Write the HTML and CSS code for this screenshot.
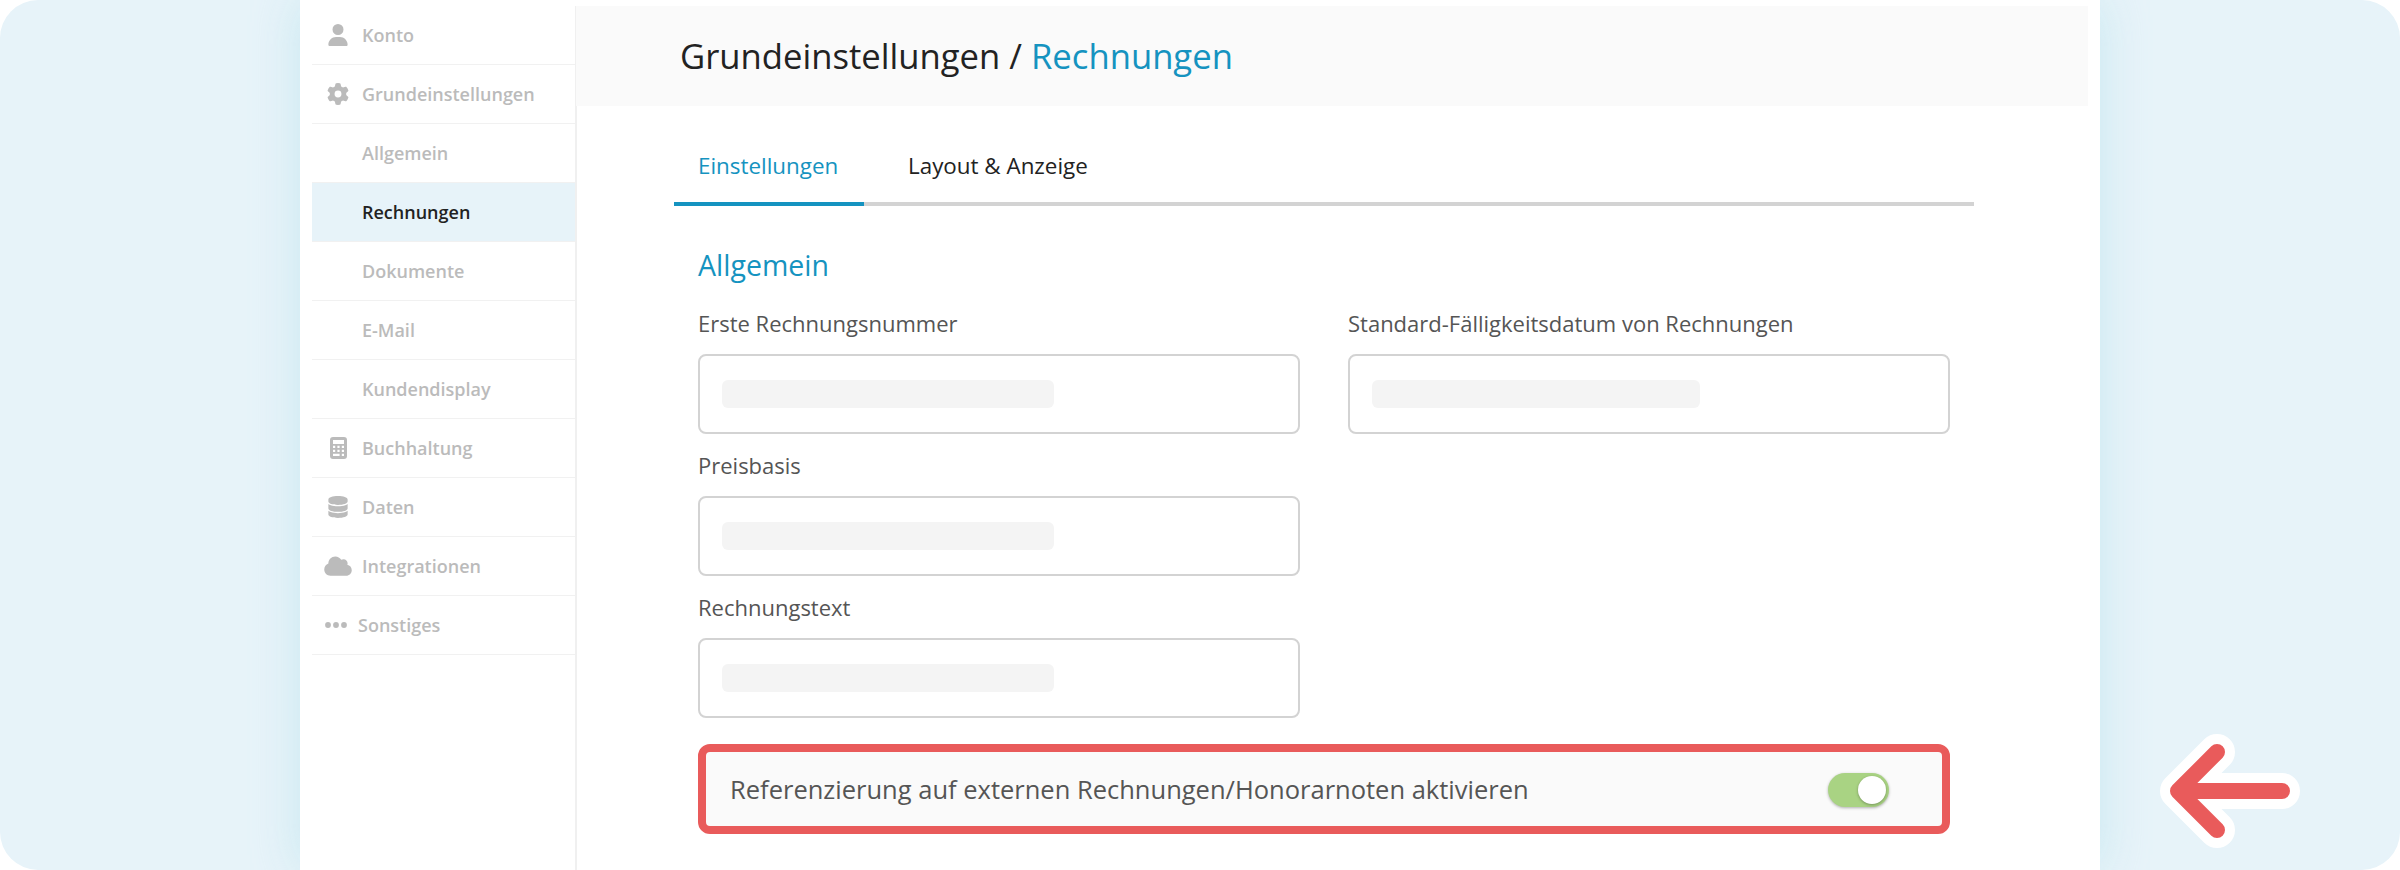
FILE: index.html
```html
<!DOCTYPE html>
<html lang="de">
<head>
<meta charset="utf-8">
<title>Grundeinstellungen / Rechnungen</title>
<link rel="stylesheet" href="styles.css">
</head>
<body>
<div class="stage">
  <div class="panel">
    <nav class="sidebar">
      <a class="item"><span class="icon"><svg width="20" height="22" viewBox="0 0 448 512"><path d="M224 256a128 128 0 1 0 0-256 128 128 0 1 0 0 256zm-46 48C80 304 0 384 0 482c0 17 13 30 30 30h388c17 0 30-13 30-30 0-98-80-178-178-178z"/></svg></span>Konto</a>
      <a class="item"><span class="icon"><svg width="22" height="22" viewBox="0 0 512 512"><path d="M496 167c3 9 0 18-6 25l-44 39a184 184 0 0 1 0 50l44 39c6 7 9 16 6 25-5 12-10 23-16 34l-5 8c-7 11-14 22-22 32-6 7-16 10-25 7l-56-18c-13 10-28 19-43 25l-13 57c-2 9-9 16-18 18a257 257 0 0 1-84 0c-9-2-16-9-18-18l-13-57c-15-6-30-15-43-25l-56 18c-9 3-19 0-25-7-8-10-15-21-22-32l-5-8c-6-11-11-22-16-34-3-9 0-18 6-25l44-39a184 184 0 0 1 0-50l-44-39c-6-7-9-16-6-25 5-12 10-23 16-34l5-8c7-11 14-22 22-32 6-7 16-10 25-7l56 18c13-10 28-19 43-25l13-57c2-9 9-16 18-18a257 257 0 0 1 84 0c9 2 16 9 18 18l13 57c15 6 30 15 43 25l56-18c9-3 19 0 25 7 8 10 15 21 22 32l5 8c6 11 11 22 16 34zM256 336a80 80 0 1 0 0-160 80 80 0 1 0 0 160z"/></svg></span>Grundeinstellungen</a>
      <a class="item sub">Allgemein</a>
      <a class="item sub active">Rechnungen</a>
      <a class="item sub">Dokumente</a>
      <a class="item sub">E-Mail</a>
      <a class="item sub">Kundendisplay</a>
      <a class="item"><span class="icon"><svg width="17" height="22" viewBox="0 0 17 22"><path fill-rule="evenodd" d="M3 0h11a3 3 0 0 1 3 3v16a3 3 0 0 1-3 3H3a3 3 0 0 1-3-3V3a3 3 0 0 1 3-3zm0 3v4h11V3zm0 5.700v2.200h2.200V8.700zm4.400 0v2.200h2.200V8.700zm4.400 0v2.200H14V8.700zM3 12.700v2.200h2.200v-2.200zm4.400 0v2.200h2.200v-2.200zm4.400 0v2.200H14v-2.200zM3 16.700v2.200h6.600v-2.200zm8.800 0v2.200H14v-2.200z"/></svg></span>Buchhaltung</a>
      <a class="item"><span class="icon"><svg width="20" height="22" viewBox="0 0 448 512"><path d="M448 80v48c0 44-100 80-224 80S0 172 0 128V80C0 36 100 0 224 0s224 36 224 80zM393 215c21-8 40-17 55-29v102c0 44-100 80-224 80S0 332 0 288V186c15 12 34 21 55 29 45 16 105 25 169 25s124-9 169-25zM0 346c15 12 34 21 55 29 45 16 105 25 169 25s124-9 169-25c21-8 40-17 55-29v86c0 44-100 80-224 80S0 476 0 432z"/></svg></span>Daten</a>
      <a class="item"><span class="icon"><svg width="28" height="22" viewBox="0 0 640 512"><path d="M0 336c0 80 65 144 144 144h368c71 0 128-57 128-128 0-62-44-114-103-125 4-11 7-23 7-35 0-53-43-96-96-96-20 0-38 6-53 16-28-48-79-80-139-80-88 0-160 72-160 160v8C40 220 0 273 0 336z"/></svg></span>Integrationen</a>
      <a class="item dots"><span class="icon"><svg width="22" height="6" viewBox="0 0 22 6"><circle cx="3" cy="3" r="2.900"/><circle cx="11" cy="3" r="2.900"/><circle cx="19" cy="3" r="2.900"/></svg></span>Sonstiges</a>
    </nav>
    <main class="main">
      <header class="header"><h1>Grundeinstellungen / <span>Rechnungen</span></h1></header>
      <div class="content">
        <div class="tabs"><a class="tab current">Einstellungen</a><a class="tab">Layout &amp; Anzeige</a></div>
        <section class="form">
          <h2>Allgemein</h2>
          <div class="grid">
            <div class="field"><label>Erste Rechnungsnummer</label><div class="input"><i class="skeleton"></i></div></div>
            <div class="field"><label>Standard-Fälligkeitsdatum von Rechnungen</label><div class="input"><i class="skeleton short"></i></div></div>
            <div class="field first"><label>Preisbasis</label><div class="input"><i class="skeleton"></i></div></div>
            <div class="field first"><label>Rechnungstext</label><div class="input"><i class="skeleton"></i></div></div>
          </div>
          <div class="option"><span class="caption">Referenzierung auf externen Rechnungen/Honorarnoten aktivieren</span><span class="toggle"></span></div>
        </section>
      </div>
    </main>
  </div>
  <svg class="arrow" width="144" height="120" viewBox="0 0 144 120"><path class="halo" d="M59 21 20 60l39 39M20 60h104"/><path class="stroke" d="M59 21 20 60l39 39M20 60h104"/></svg>
</div>
</body>
</html>
```

FILE: styles.css
```css
* { box-sizing: border-box; }
body { margin: 0; background: #fff; font-family: "Open Sans", sans-serif; }
.stage { position: relative; width: 2400px; height: 870px; padding: 0 300px; border-radius: 38px; background: #e7f3f9; overflow: hidden; }
.panel { display: flex; width: 1800px; height: 870px; padding-left: 12px; background: #fff; box-shadow: 0 0 44px rgba(168, 222, 232, 0.480); }

.sidebar { width: 263px; padding-top: 5.500px; }
.item { display: flex; align-items: center; height: 59.050px; padding-left: 12px; border-bottom: 1.500px solid #f1f1f1; font-size: 18px; font-weight: 600; color: #bbb; }
.sub { padding-left: 50px; }
.active { background: #e7f3f9; color: #222; }
.icon { display: flex; justify-content: center; width: 28px; margin-right: 10px; }
.icon svg { fill: #bbb; }
.dots .icon { width: 24px; margin-right: 10px; }

.main { display: flex; flex-direction: column; width: 1513px; padding-top: 6px; }
.header { display: flex; align-items: center; height: 100px; padding-left: 104px; background: #fafafa; border-left: 1px solid #f0f0f0; }
h1, h2 { margin: 0; font-weight: 400; }
h1 { font-size: 34.650px; line-height: 48px; color: #222; }
h1 span { color: #1593c0; }
.content { flex: 1; padding: 32px 114px 0 97px; border-left: 2px solid #f0f0f0; }
.tabs { display: flex; gap: 20px; height: 68px; border-bottom: 4px solid #d3d3d3; font-size: 22.400px; color: #222; }
.tab { height: 68px; padding: 11px 25px 0 24px; line-height: 34px; }
.current { width: 190px; border-bottom: 4px solid #1593c0; color: #1593c0; }

.form { width: 1252px; margin-left: 24px; padding-top: 39px; }
h2 { font-size: 28.500px; line-height: 40px; color: #1593c0; }
.grid { display: grid; grid-template-columns: 602px 602px; column-gap: 48px; padding-top: 17px; }
.first { grid-column: 1; }
.field { height: 142px; }
label { display: block; height: 52px; line-height: 42px; font-size: 22px; color: #555; }
.input { display: flex; align-items: center; height: 80px; padding-left: 22px; border: 2px solid #d3d3d3; border-radius: 8px; }
.skeleton { width: 332px; height: 28px; border-radius: 6px; background: #f4f4f4; }
.short { width: 328px; }

.option { display: flex; align-items: center; justify-content: space-between; height: 90px; margin-top: 16px; padding: 1px 53px 0 24px; border: 8px solid #e95b5b; border-radius: 12px; background: #fafafa; font-size: 25.500px; color: #555; }
.caption { padding-bottom: 2px; }
.toggle { display: flex; justify-content: flex-end; width: 61px; height: 34px; padding: 3px; border-radius: 17px; background: #a9d383; box-shadow: 0 1px 3px rgba(0, 0, 0, 0.300); }
.toggle::after { content: ""; width: 28px; height: 28px; border-radius: 50%; background: #fff; box-shadow: 0 1px 3px rgba(0, 0, 0, 0.300); }

.arrow { position: absolute; left: 2158px; top: 731px; fill: none; stroke-linecap: round; stroke-linejoin: round; }
.halo { stroke: #fff; stroke-width: 36; }
.stroke { stroke: #e95b5b; stroke-width: 16; }
```
